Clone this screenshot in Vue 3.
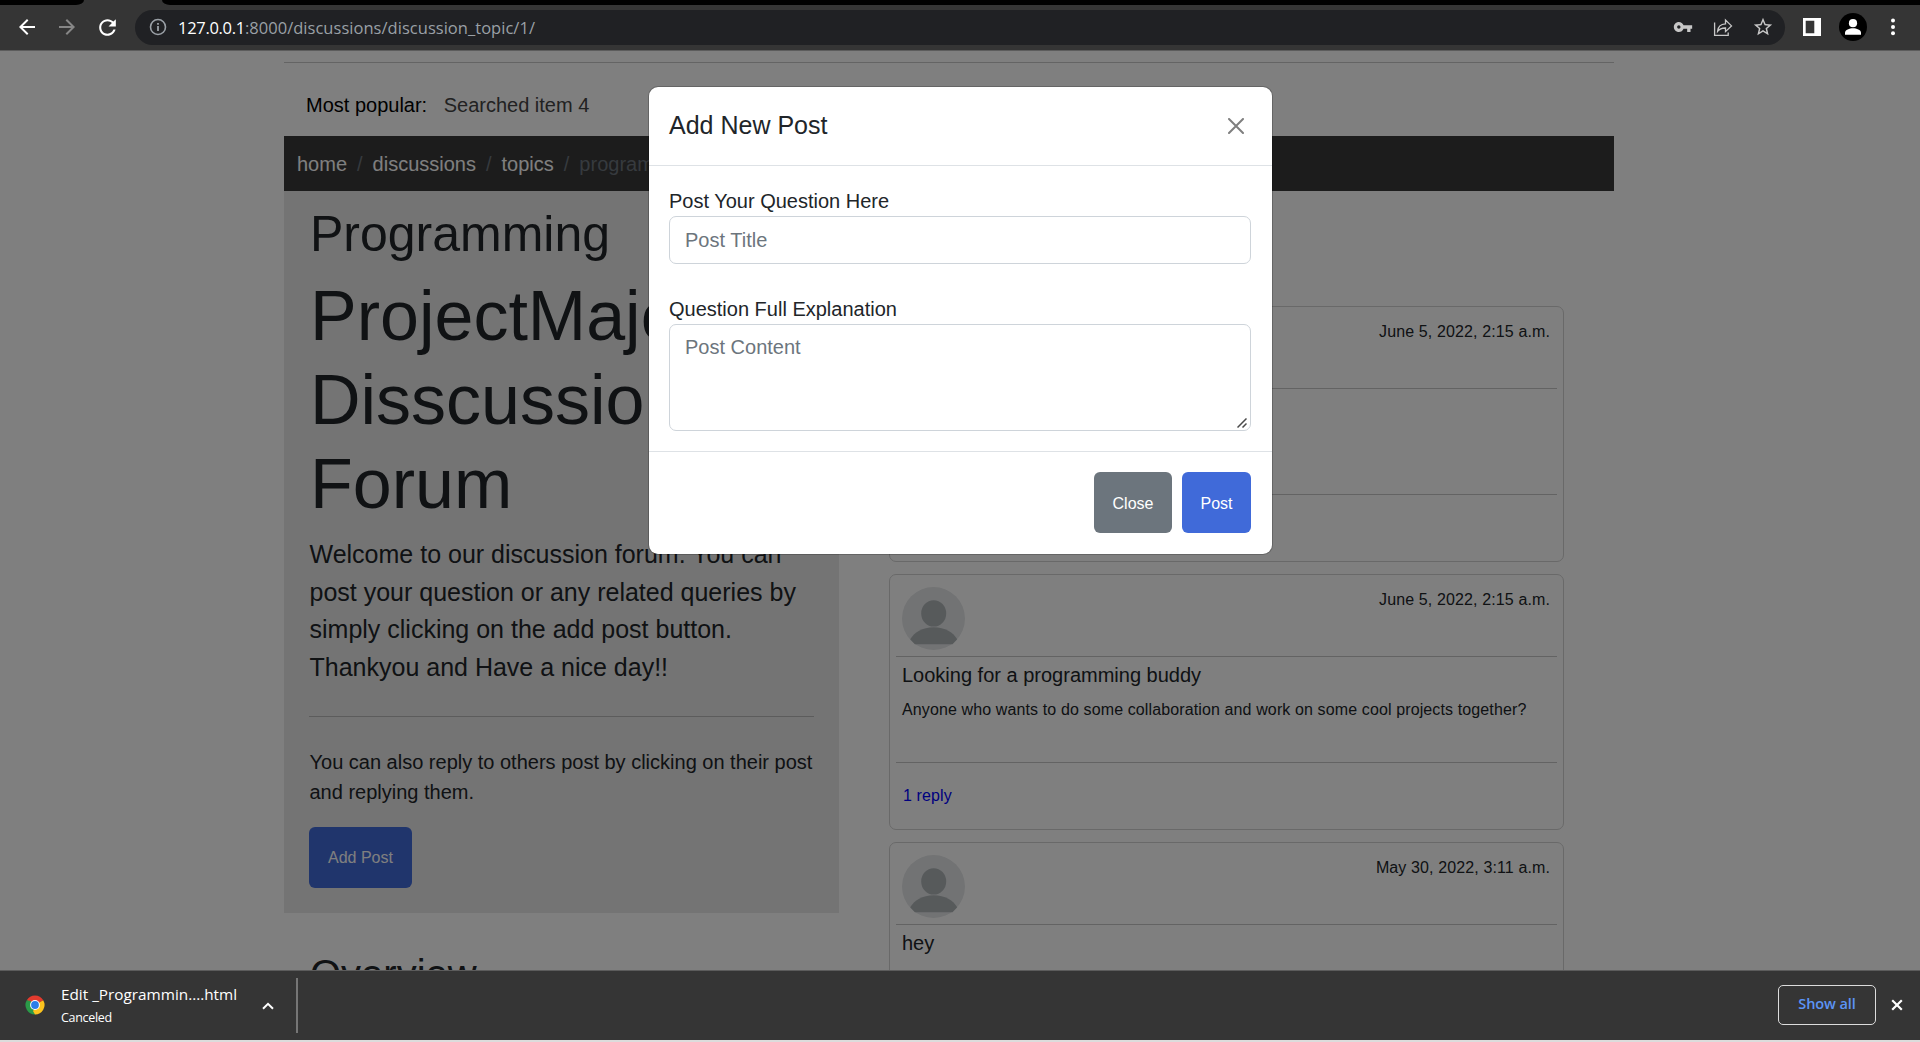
<script setup>
const crumbs = ['home', 'discussions', 'topics']
const posts = [
  { id: 1, date: 'June 5, 2022, 2:15 a.m.', covered: true },
  {
    id: 2,
    date: 'June 5, 2022, 2:15 a.m.',
    title: 'Looking for a programming buddy',
    body: 'Anyone who wants to do some collaboration and work on some cool projects together?',
    replies: '1 reply',
  },
  { id: 3, date: 'May 30, 2022, 3:11 a.m.', title: 'hey', body: '', replies: '' },
]
</script>

<template>
  <div class="window">
    <div class="tabs"><span class="tab-left"></span><span class="tab-right"></span></div>
    <header class="toolbar">
      <svg class="ic back" viewBox="0 0 24 24"><path d="M20 11H7.83l5.59-5.59L12 4l-8 8 8 8 1.41-1.41L7.83 13H20z" /></svg>
      <svg class="ic fwd" viewBox="0 0 24 24"><path d="M4 11h12.17l-5.59-5.59L12 4l8 8-8 8-1.41-1.41L16.17 13H4z" /></svg>
      <svg class="ic reload" viewBox="0 0 24 24"><path d="M17.65 6.35C16.2 4.9 14.21 4 12 4c-4.42 0-7.99 3.58-7.99 8s3.57 8 7.99 8c3.73 0 6.84-2.55 7.73-6h-2.08c-.82 2.33-3.04 4-5.65 4-3.31 0-6-2.69-6-6s2.69-6 6-6c1.66 0 3.14.69 4.22 1.78L13 11h7V4l-2.35 2.35z" /></svg>
      <div class="omnibox">
        <svg class="info" viewBox="0 0 18 18"><circle cx="9" cy="9" r="7.5" fill="none" stroke="#9aa0a6" stroke-width="1.6" /><path d="M8.1 8h1.8v5H8.1zM8.1 5h1.8v1.8H8.1z" fill="#9aa0a6" /></svg>
        <span class="url"><b>127.0.0.1</b><span>:8000/discussions/discussion_topic/1/</span></span>
        <svg class="key" viewBox="0 0 24 24"><path d="M12.65 10C11.83 7.67 9.61 6 7 6c-3.31 0-6 2.69-6 6s2.69 6 6 6c2.61 0 4.83-1.67 5.65-4H17v4h4v-4h2v-4H12.65zM7 14c-1.1 0-2-.9-2-2s.9-2 2-2 2 .9 2 2-.9 2-2 2z" /></svg>
        <svg class="share" viewBox="0 0 20 20"><path d="M1.6 5.5v12.900h13.600v-3" /><path d="M4.600 14.300C5 9.500 8 7.100 12.500 6.900V3l6 5.900-6 5.700v-3.600C9 10.900 6.500 11.900 4.600 14.300z" /></svg>
        <svg class="star" viewBox="0 0 24 24"><path d="M22 9.240l-7.190-.62L12 2 9.190 8.630 2 9.240l5.460 4.730L5.820 21 12 17.270 18.180 21l-1.630-7.030L22 9.240zM12 15.400l-3.760 2.270 1-4.280-3.320-2.880 4.380-.38L12 6.100l1.710 4.040 4.380.38-3.320 2.880 1 4.280L12 15.400z" /></svg>
      </div>
      <svg class="panel-ic" viewBox="0 0 18 18"><path fill-rule="evenodd" d="M0 0h18v18H0zM2.700 2.700v12.600h8.600V2.700z" /></svg>
      <svg class="me" viewBox="0 0 28 28"><circle cx="14" cy="14" r="14" fill="#000" /><circle cx="14" cy="10.200" r="4.100" fill="#fff" /><path d="M6 21.700v-1.900c0-3 4.500-4.600 8-4.600s8 1.600 8 4.600v1.900z" fill="#fff" /></svg>
      <svg class="dots" viewBox="0 0 6 18"><circle cx="3" cy="2.600" r="2" /><circle cx="3" cy="9" r="2" /><circle cx="3" cy="15.300" r="2" /></svg>
    </header>

    <main class="page">
      <div class="content">
        <div class="rule top-rule"></div>
        <div class="popular"><span class="lbl">Most popular:</span><span class="item">Searched item 4</span></div>
        <nav class="crumbs">
          <template v-for="c in crumbs" :key="c"><a>{{ c }}</a><i>/</i></template>
          <span>programming</span>
        </nav>
        <div class="cols">
          <div class="left">
            <section class="jumbo">
              <h2>Programming</h2>
              <h1>ProjectMajor Disscussion Forum</h1>
              <p class="lead">Welcome to our discussion forum. You can post your question or any related queries by simply clicking on the add post button. Thankyou and Have a nice day!!</p>
              <div class="rule"></div>
              <p class="sub">You can also reply to others post by clicking on their post and replying them.</p>
              <button class="btn primary add">Add Post</button>
            </section>
            <h3>Overview</h3>
          </div>
          <div class="right">
            <article v-for="p in posts" :key="p.id" class="card">
              <div class="card-head">
                <svg v-if="!p.covered" class="avatar" viewBox="0 0 63 63">
                  <circle cx="31.500" cy="31.500" r="31.500" fill="#e4e6e8" />
                  <ellipse cx="31.700" cy="26.400" rx="12.500" ry="13.200" fill="#aeb4b7" />
                  <path d="M8.200 52.300C12 45.500 20.500 40.200 31.700 40.200S51.500 45.500 55.200 52.300L50.500 57.300H12.900z" fill="#aeb4b7" />
                </svg>
                <time>{{ p.date }}</time>
              </div>
              <div class="rule"></div>
              <div class="card-body">
                <h4>{{ p.title }}</h4>
                <p>{{ p.body }}</p>
              </div>
              <div class="rule"></div>
              <a class="replies">{{ p.replies }}</a>
            </article>
          </div>
        </div>
      </div>
      <div class="backdrop">
        <div class="modal">
          <div class="m-head">
            <h5>Add New Post</h5>
            <svg class="x" viewBox="0 0 16 16"><path d="M1 1l14 14M15 1L1 15" /></svg>
          </div>
          <div class="m-body">
            <label>Post Your Question Here</label>
            <input type="text" placeholder="Post Title" />
            <label>Question Full Explanation</label>
            <div class="area">
              <textarea placeholder="Post Content"></textarea>
              <svg class="grip" viewBox="0 0 10 10"><path d="M.5 9.500l9-9M5.500 9.500l4-4" /></svg>
            </div>
          </div>
          <div class="m-foot">
            <button class="btn secondary">Close</button>
            <button class="btn primary">Post</button>
          </div>
        </div>
      </div>
    </main>

    <footer class="downloads">
      <svg class="chrome" viewBox="0 0 20 20">
        <path d="M10 10L1.770 5.250A9.500 9.500 0 0 1 18.230 5.250z" fill="#e33b2e" />
        <path d="M10 10L18.230 5.250A9.500 9.500 0 0 1 10 19.500z" fill="#fcc31e" />
        <path d="M10 10V19.500A9.500 9.500 0 0 1 1.770 5.250z" fill="#2a9a48" />
        <path d="M10 5.500H18.350L18.230 5.250 10 3z" fill="#e33b2e" />
        <path d="M13.900 12.250L10 19.500 8 16l2-3z" fill="#fcc31e" />
        <path d="M6.100 12.250L1.770 5.250 6 6z" fill="#2a9a48" />
        <circle cx="10" cy="10" r="4.900" fill="#fff" /><circle cx="10" cy="10" r="3.900" fill="#2c7de9" />
      </svg>
      <div class="file"><div class="name">Edit _Programmin....html</div><div class="state">Canceled</div></div>
      <svg class="chev" viewBox="0 0 12 8"><path d="M1 6.800L6 1.800l5 5" /></svg>
      <div class="sep"></div>
      <button class="show">Show all</button>
      <svg class="dismiss" viewBox="0 0 12 12"><path d="M1.200 1.200l9.600 9.600M10.800 1.200l-9.600 9.600" /></svg>
    </footer>
    <div class="edge"></div>
  </div>
</template>

<style>
body { margin: 0; overflow: hidden; }
</style>

<style scoped>
* { box-sizing: border-box; }
.window { width: 1920px; height: 1042px; display: flex; flex-direction: column; overflow: hidden; font-family: "Liberation Sans", Arial, sans-serif; font-size: 20px; color: #212529; }
h1, h2, h3, h4, h5, p { margin: 0; font-weight: 400; }
svg { display: block; flex: none; }

.tabs { height: 5px; display: flex; justify-content: space-between; background: #353535; }
.tab-left { width: 84px; background: #000; border-bottom-right-radius: 8px 5px; }
.tab-right { width: 1758px; background: #000; border-bottom-left-radius: 8px 5px; }
.toolbar { height: 46px; padding-bottom: 1px; border-bottom: 1px solid #5c5c5c; background: #353535; display: flex; align-items: center; }
.ic { width: 24px; height: 24px; fill: #fff; }
.back { margin-left: 15px; }
.fwd { margin-left: 16px; fill: #878787; }
.reload { margin-left: 16px; width: 25px; height: 25px; }
.omnibox { width: 1650px; height: 35px; margin-left: 15px; padding: 0 11px 0 14px; border-radius: 18px; background: #202124; display: flex; align-items: center; }
.info { width: 18px; height: 18px; }
.url { margin: 0 0 0 11px; flex: 1; font-family: "Open Sans", sans-serif; font-size: 16.5px; letter-spacing: -0.3px; color: #9aa0a6; white-space: nowrap; }
.url b { font-weight: 400; color: #fff; }
.url span { letter-spacing: 0.03px; }
.key { width: 20px; height: 20px; fill: #c7c7c7; }
.share { width: 20px; height: 20px; margin-left: 20px; fill: none; stroke: #c7c7c7; stroke-width: 1.300; }
.star { width: 22px; height: 22px; margin-left: 19px; fill: #c7c7c7; }
.panel-ic { width: 18px; height: 18px; margin-left: 18px; fill: #fff; }
.me { width: 28px; height: 28px; margin-left: 18px; }
.dots { width: 6px; height: 18px; margin-left: 22.500px; fill: #fff; }

.page { height: 919px; position: relative; overflow: hidden; background: #fff; }
.content { width: 1330px; margin-left: 284px; padding-top: 11px; }
.rule { height: 1px; background: #c8c8c8; }
.popular { height: 73px; padding: 27px 0 0 22px; line-height: 30px; display: flex; gap: 16.500px; }
.lbl { color: #000; }
.item { color: #444; }
.crumbs { height: 55px; padding: 13px 0 0 13px; line-height: 30px; background: #383838; color: #6c757d; display: flex; gap: 10px; }
.crumbs a { color: #fff; }
.crumbs i { font-style: normal; }
.cols { display: flex; gap: 50px; }
.left { width: 555px; }
.jumbo { height: 722px; padding: 13px 25px 0; background: #e9e9e9; }
h2 { padding-left: 1px; font-size: 50px; line-height: 60px; }
h1 { margin-top: 10px; padding-left: 1px; font-size: 70px; line-height: 84px; }
.lead { margin: 10px -5px 30px 0; padding-left: 0.5px; font-size: 25px; line-height: 37.5px; }
.sub { margin: 30px -5px 20px 0; padding-left: 0.5px; line-height: 30px; }
.jumbo .rule { background: #b9b9b9; }
h3 { margin: 37px 0 0 26px; font-size: 40px; line-height: 48px; }
.btn { height: 61px; padding: 0 18px; border: 0; border-radius: 6px; font: 16px "Liberation Sans", Arial, sans-serif; color: #fff; }
.primary { background: #406ad9; }
.secondary { background: #6c757d; }
.add { display: block; width: 103px; }
.right { width: 675px; padding-top: 115px; display: flex; flex-direction: column; gap: 12px; }
.card { height: 256px; flex: none; padding: 0 6px; border: 1px solid #d2d2d2; border-radius: 7px; font-size: 16px; line-height: 24px; letter-spacing: 0.12px; }
.card .rule { background: #c6c6c6; }
.card-head { height: 81px; padding: 12px 7px 0 6px; display: flex; align-items: flex-start; }
.avatar { width: 63px; height: 63px; }
time { margin: 1px 0 0 auto; }
.card-body { height: 105px; padding: 3px 6px 0; }
h4 { min-height: 30px; font-size: 20px; line-height: 30px; letter-spacing: 0; }
.card-body p { margin-top: 8px; white-space: nowrap; }
.replies { display: block; padding: 21px 7px 0; color: #0000ff; }

.backdrop { position: absolute; inset: 0; background: rgba(0, 0, 0, 0.5); padding: 35px 0 0 648px; }
.modal { width: 625px; height: 469px; border: 1px solid rgba(0, 0, 0, 0.2); border-radius: 10px; background: #fff; background-clip: padding-box; }
.m-head { height: 79px; padding: 0 28px 0 20px; border-bottom: 1px solid #dee2e6; display: flex; align-items: center; justify-content: space-between; }
h5 { font-size: 25px; line-height: 37.5px; }
.x { width: 16px; height: 16px; stroke: #7f7f7f; stroke-width: 2; stroke-linecap: round; }
.m-body { height: 285px; padding: 20px 20px 0; display: flex; flex-direction: column; }
label { line-height: 30px; }
input, textarea { display: block; width: 582px; margin: 0; padding: 7px 15px; border: 1px solid #ced4da; border-radius: 7px; outline: 0; background: #fff; font: 20px/30px "Liberation Sans", Arial, sans-serif; }
input { height: 48px; margin-bottom: 30px; }
textarea { height: 107px; resize: none; }
.area { position: relative; width: 582px; }
.grip { position: absolute; right: 4px; bottom: 3px; width: 10px; height: 10px; stroke: #4a4a4a; stroke-width: 1.500; }
input::placeholder, textarea::placeholder { color: #6c757d; }
.m-foot { padding: 20px 21px 0 20px; border-top: 1px solid #dee2e6; display: flex; justify-content: flex-end; gap: 10px; }
.m-foot .secondary { width: 78px; }
.m-foot .primary { width: 69px; }
.m-foot .btn { padding-top: 2px; }

.downloads { height: 70px; padding-bottom: 2px; border-top: 1px solid #5c5c5c; background: #353535; display: flex; align-items: center; color: #fff; font-family: "Open Sans", sans-serif; }
.chrome { width: 20px; height: 20px; margin-left: 25px; }
.file { width: 174px; margin: 2px 0 0 16px; white-space: nowrap; }
.name { font-size: 15.300px; line-height: 24px; }
.state { font-size: 12.500px; line-height: 23px; letter-spacing: -0.3px; }
.chev { width: 12px; height: 8px; margin: 2px 0 0 27px; fill: none; stroke: #fff; stroke-width: 2; }
.sep { width: 2px; height: 55px; margin: 2px 0 0 22px; background: #767676; }
.show { width: 98px; height: 40px; margin-left: auto; padding: 0 0 2px; border: 1px solid #dcdcdc; border-radius: 5px; background: none; color: #5c94f5; font: 600 14.500px "Open Sans", sans-serif; letter-spacing: -0.1px; }
.dismiss { width: 12px; height: 12px; margin: 0 17px 0 15px; stroke: #fff; stroke-width: 2.200; }
.edge { height: 2px; background: #dcdcdc; }
</style>
